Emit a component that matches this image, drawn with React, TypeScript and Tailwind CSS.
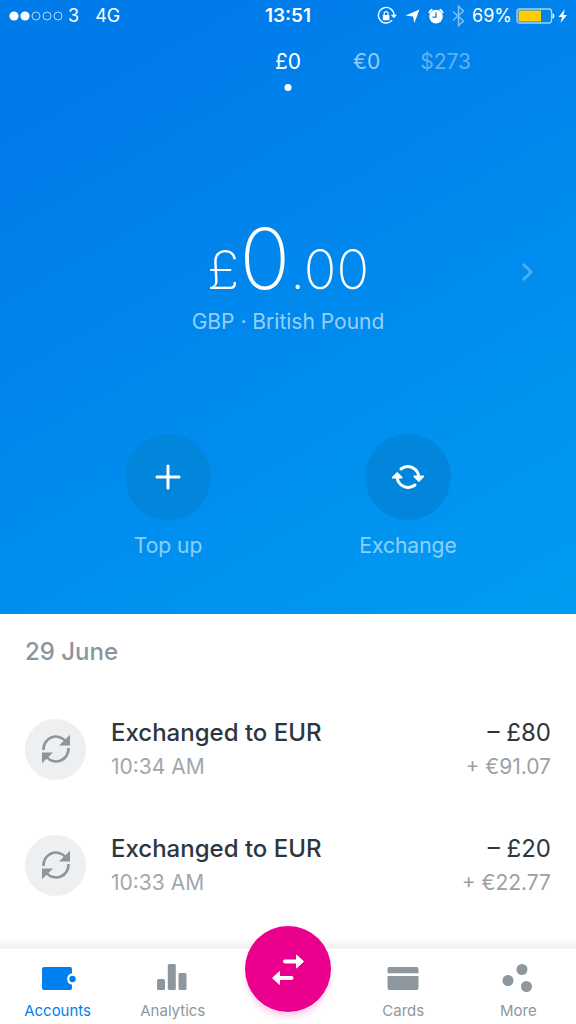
import type { ReactNode } from "react";

type Transaction = {
  id: number;
  title: string;
  time: string;
  amount: string;
  received: string;
};

const transactions: Transaction[] = [
  { id: 1, title: "Exchanged to EUR", time: "10:34 AM", amount: "– £80", received: "+ €91.07" },
  { id: 2, title: "Exchanged to EUR", time: "10:33 AM", amount: "– £20", received: "+ €22.77" },
];

function StatusBar() {
  return (
    <div className="grid h-8 grid-cols-[1fr_auto_1fr] items-center px-2 text-lg leading-8">
      <div className="flex items-center">
        <svg width="56" height="12" viewBox="0 0 56 12" fill="none" aria-hidden="true">
          <circle cx="6" cy="6" r="4.6" fill="white" />
          <circle cx="17" cy="6" r="4.6" fill="white" />
          <circle cx="28" cy="6" r="4" stroke="white" strokeOpacity="0.7" />
          <circle cx="39" cy="6" r="4" stroke="white" strokeOpacity="0.7" />
          <circle cx="50" cy="6" r="4" stroke="white" strokeOpacity="0.7" />
        </svg>
        <span className="ml-1">3</span>
        <span className="ml-4">4G</span>
      </div>
      <span className="text-[19px] font-semibold">13:51</span>
      <div className="flex items-center justify-end">
        <svg width="92" height="22" viewBox="0 0 92 22" fill="none" aria-hidden="true">
          <path d="M16.200 15.200A7.800 7.800 0 1 1 18 10" stroke="white" strokeWidth="1.3" />
          <path d="M14.800 9.800h6.200L17.900 13.200z" fill="white" />
          <rect x="6.800" y="10" width="6.600" height="5.200" rx="0.600" fill="white" />
          <path d="M8.200 10.200V8.600a1.900 1.900 0 0 1 3.800 0v1.600" stroke="white" strokeWidth="1.2" />
          <path d="M43.500 4.500 38.400 18l-1.400-6.600-7.400-.8z" fill="white" />
          <circle cx="60" cy="11.600" r="6.800" fill="white" />
          <path d="M60 7.600v4.600h-3.400" stroke="#007eec" strokeWidth="1.3" />
          <path d="M53 8a8 8 0 0 1 3.400-3.600M63.600 4.400A8 8 0 0 1 67 8" stroke="white" strokeWidth="1.8" />
          <path d="m77 6.500 10.500 9.500-5 4.500v-19l5 4.500L77 15.500" stroke="white" strokeOpacity="0.5" strokeWidth="1.500" />
        </svg>
        <span className="ml-1">69%</span>
        <svg className="ml-1" width="52" height="18" viewBox="0 0 52 18" fill="none" aria-hidden="true">
          <rect x="1" y="2" width="34.500" height="14" rx="2.500" stroke="white" strokeOpacity="0.65" strokeWidth="1.3" />
          <path d="M2.500 3.500H25v11H2.500z" fill="#ffcc00" />
          <path d="M36.500 6.200c2.400.4 2.400 5.200 0 5.600z" fill="white" />
          <path d="m49 2-6.500 8h3.600l-1.600 6 6.500-8h-3.600z" fill="white" />
        </svg>
      </div>
    </div>
  );
}

function CurrencyTabs() {
  return (
    <div className="mt-4 grid grid-cols-[1fr_auto_1fr] text-[21px] leading-7">
      <button className="relative col-start-2">
        £0
        <span className="absolute left-1/2 top-9 size-[7px] -translate-x-1/2 rounded-full bg-white" />
      </button>
      <div className="flex gap-10 pl-[52px]">
        <button className="text-white/60">€0</button>
        <button className="text-white/40">$273</button>
      </div>
    </div>
  );
}

function HeaderAction({ label, children }: { label: string; children: ReactNode }) {
  return (
    <button className="flex flex-col items-center gap-3">
      <span className="flex size-[86px] items-center justify-center rounded-full bg-[#0286dc]">{children}</span>
      <span className="text-[21px] leading-7 text-white/55">{label}</span>
    </button>
  );
}

function TransactionRow({ transaction }: { transaction: Transaction }) {
  return (
    <li className="flex items-center gap-[25px]">
      <span className="flex size-[61px] shrink-0 items-center justify-center rounded-full bg-[#edeff1]">
        <svg width="30" height="30" viewBox="0 0 30 30" fill="none" aria-hidden="true">
          <path d="M2.500 16A12.500 12.500 0 0 1 24.500 7" stroke="#8b959b" strokeWidth="2.600" />
          <path d="M27.500 14A12.500 12.500 0 0 1 5.500 23" stroke="#8b959b" strokeWidth="2.600" />
          <path d="M29 .8V11.600H18zM1 29.200V18.400H12z" fill="#8b959b" />
        </svg>
      </span>
      <div className="flex-1">
        <p className="text-2xl leading-9 font-medium text-[#2d363e]">{transaction.title}</p>
        <p className="text-[21px] leading-8 text-[#a0a8ae]">{transaction.time}</p>
      </div>
      <div className="text-right">
        <p className="text-2xl leading-9 text-[#2d363e]">{transaction.amount}</p>
        <p className="text-[21px] leading-8 text-[#98a2a9]">{transaction.received}</p>
      </div>
    </li>
  );
}

function NavItem({ label, active, children }: { label: string; active?: boolean; children: ReactNode }) {
  return (
    <a
      href="#"
      aria-current={active ? "page" : undefined}
      className={`flex flex-col items-center pt-3 ${active ? "text-[#0080ef]" : "text-[#8d979d]"}`}
    >
      <svg width="36" height="36" viewBox="0 0 36 36" fill="currentColor" aria-hidden="true">
        {children}
      </svg>
      <span className="mt-1 text-[15px] leading-5">{label}</span>
    </a>
  );
}

export default function App() {
  return (
    <div className="flex min-h-screen flex-col bg-white font-['Inter',sans-serif]">
      <header className="bg-linear-150 from-[#007bea] from-15% to-[#009cf2] pb-[54px] text-white">
        <StatusBar />
        <CurrencyTabs />

        <section className="relative mt-[141px] flex flex-col items-center">
          <h1 className="flex items-baseline text-[54px] leading-[84px] font-extralight">
            £<span className="text-[84px]">0</span>.00
          </h1>
          <p className="-mt-1 text-[21px] leading-7 text-white/60">GBP · British Pound</p>
          <button aria-label="Next account" className="absolute right-10 top-11">
            <svg width="16" height="22" viewBox="0 0 16 22" fill="none">
              <path d="m3 3 8 8-8 8" stroke="white" strokeOpacity="0.3" strokeWidth="2.800" />
            </svg>
          </button>
        </section>

        <div className="mt-[98px] grid grid-cols-2 px-12">
          <HeaderAction label="Top up">
            <svg width="26" height="26" viewBox="0 0 26 26" fill="none" aria-hidden="true">
              <path d="M13 2v22M2 13h22" stroke="white" strokeWidth="3" strokeLinecap="round" />
            </svg>
          </HeaderAction>
          <HeaderAction label="Exchange">
            <svg width="34" height="28" viewBox="0 0 34 28" fill="none" aria-hidden="true">
              <path d="M10 6a11 11 0 0 1 17.800 8M24 22A11 11 0 0 1 6.200 14" stroke="white" strokeWidth="3" strokeLinecap="round" />
              <path d="M23.400 13.400h8.800L27.800 17.800zM1.800 14.600h8.800L6.200 10.200z" fill="white" stroke="white" strokeWidth="2" strokeLinejoin="round" />
            </svg>
          </HeaderAction>
        </div>
      </header>

      <main className="flex-1 px-[25px] pt-5">
        <h2 className="text-2xl leading-9 font-medium text-[#8b969c]">29 June</h2>
        <ul className="mt-[45px] flex flex-col gap-12">
          {transactions.map((transaction) => (
            <TransactionRow key={transaction.id} transaction={transaction} />
          ))}
        </ul>
      </main>

      <nav className="sticky bottom-0 grid grid-cols-5 bg-white pb-[3px] shadow-[0_-5px_6px_2px_#f1f3f4]">
        <NavItem label="Accounts" active>
          <path d="M4 6h26a2 2 0 0 1 2 2v4.200a5.900 5.900 0 0 0 0 11.600V27a2 2 0 0 1-2 2H4a2 2 0 0 1-2-2V8a2 2 0 0 1 2-2z" />
          <circle cx="32.500" cy="18" r="3.200" />
        </NavItem>
        <NavItem label="Analytics">
          <rect x="2" y="18" width="8" height="11" rx="1.500" />
          <rect x="12.800" y="3" width="8" height="26" rx="1.500" />
          <rect x="23.500" y="12" width="8" height="17" rx="1.500" />
        </NavItem>
        <div className="flex justify-center">
          <button
            aria-label="Transfer"
            className="-mt-[23px] flex size-[86px] items-center justify-center rounded-full bg-[#eb008d] shadow-[0_6px_6px_-1px_#fbd0eb]"
          >
            <svg width="34" height="34" viewBox="0 0 34 34" fill="white" aria-hidden="true">
              <path d="M14 9.500h11M9 26h11.500" stroke="white" strokeWidth="4" strokeLinecap="round" />
              <path d="m25.500 3 7 6.500-7 6.500zM8.500 19.500v13l-7-6.500z" stroke="white" strokeLinejoin="round" />
            </svg>
          </button>
        </div>
        <NavItem label="Cards">
          <path d="M4.500 6h27a2 2 0 0 1 2 2v4.200h-31V8a2 2 0 0 1 2-2zM2.500 15h31v12a2 2 0 0 1-2 2h-27a2 2 0 0 1-2-2z" />
        </NavItem>
        <NavItem label="More">
          <circle cx="22" cy="8.500" r="5.500" />
          <circle cx="8" cy="19.500" r="5.500" />
          <circle cx="26.500" cy="25.500" r="5.500" />
        </NavItem>
      </nav>
    </div>
  );
}
